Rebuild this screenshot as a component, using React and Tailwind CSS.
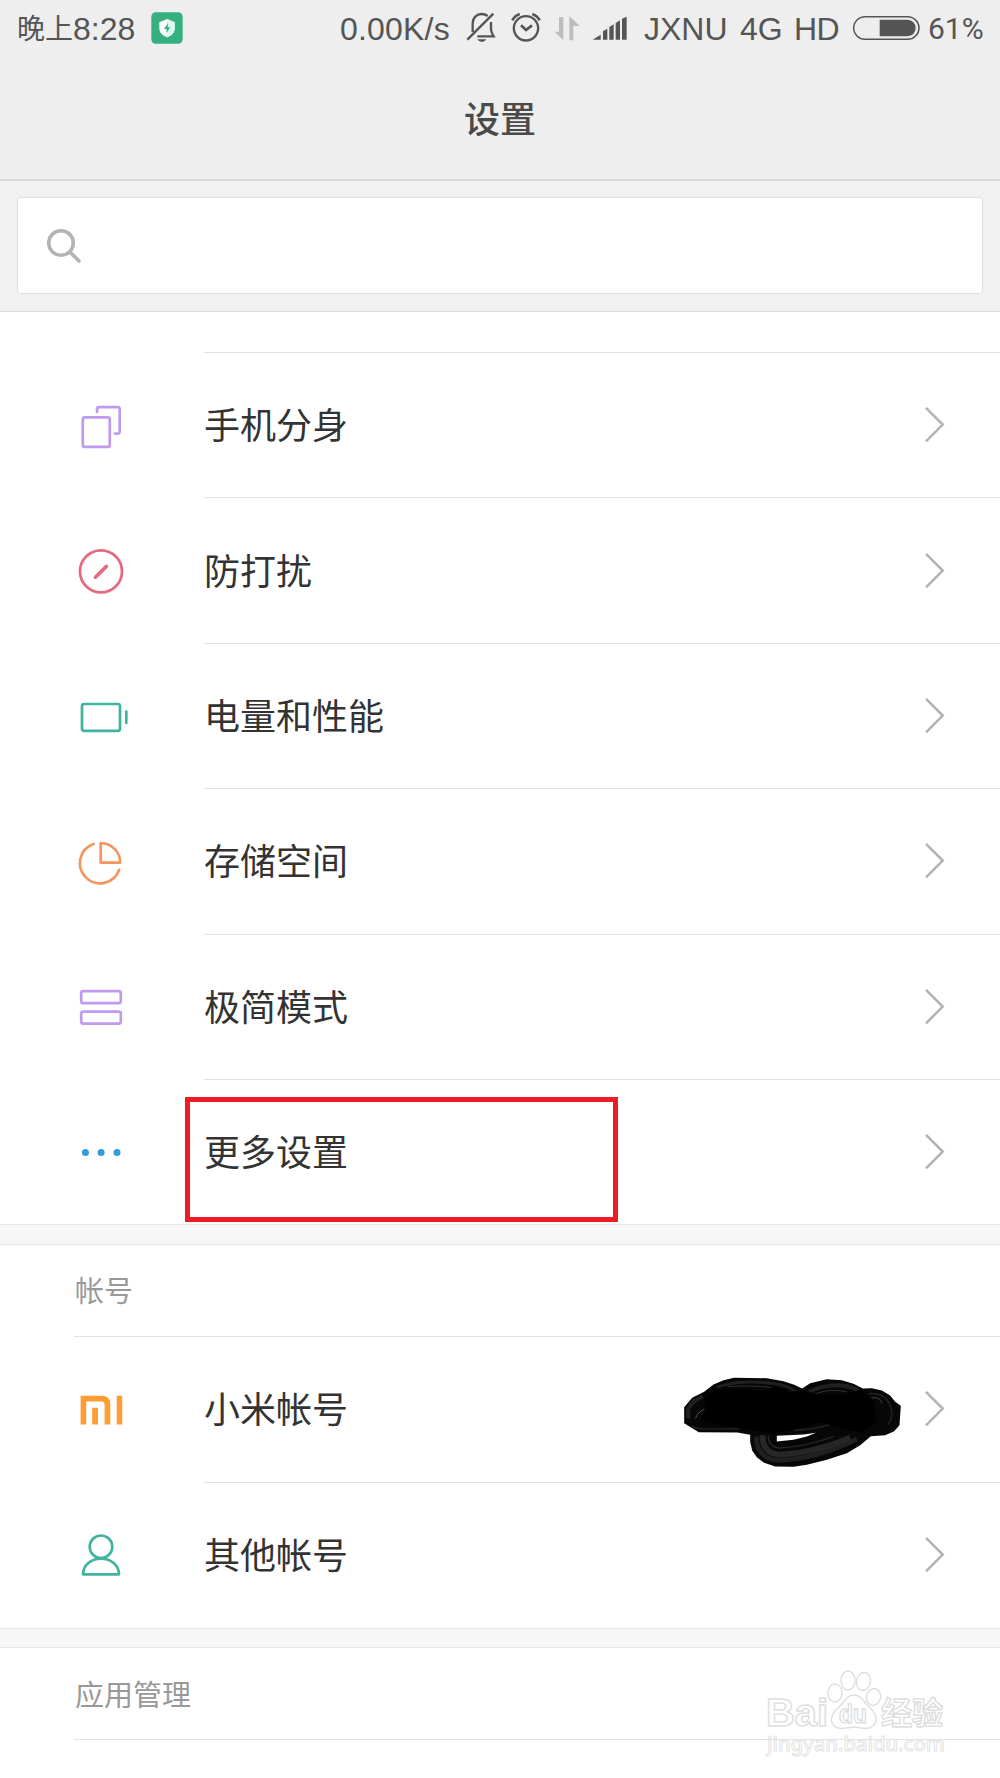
const LINE = 'border-[#e2e2e2]';

function ShieldBadge() {
  return (
    <svg className="w-8 h-8 shrink-0 -translate-y-px" viewBox="0 0 96 96">
      <rect x="1" y="1" width="94" height="94" rx="13" fill="#34b081" />
      <path d="M48 21 71 31V51Q70 67 48 76Q26 67 25 51V31Z" fill="#fff" />
      <path d="M48 21 71 31V51Q70 67 48 76Z" fill="#d9fbee" />
      <path d="M51 33 39 51H47L45 64 58 46H50Z" fill="#34b081" />
    </svg>
  );
}

function BellOffIcon() {
  return (
    <svg className="w-[30px] h-[30px] shrink-0 -translate-y-0.5" viewBox="0 0 90 90" fill="none" stroke="#555" strokeWidth="7">
      <path d="M20 60V35C20 17 32 6 47 6C54 6 60 8 65 12" />
      <path d="M75 30V52C75 60 79 66 83 73H34" />
      <path d="M4 83 82 5" />
      <path d="M34 82H61Q57 90 48 90Q38 90 34 82Z" fill="#555" stroke="none" />
    </svg>
  );
}

function AlarmIcon() {
  return (
    <svg className="w-[30px] h-[30px] shrink-0 -translate-y-0.5" viewBox="0 0 90 90" fill="none" stroke="#555" strokeWidth="7">
      <circle cx="45" cy="49" r="36.5" />
      <path d="M30 40 45 54 63 40" strokeWidth="8" />
      <path d="M4 25Q11 11 26 6M86 25Q79 11 64 6" strokeWidth="8" />
    </svg>
  );
}

function DataArrowsIcon() {
  return (
    <svg className="w-[26px] h-[26px] shrink-0 -translate-y-px" viewBox="0 0 78 78" fill="#bdbdbd">
      <path d="M15 6H28V76L2 50H15Z" />
      <path d="M46 3 77 33H58V76H46Z" />
    </svg>
  );
}

function SignalIcon() {
  return (
    <svg className="w-[35px] h-6 shrink-0 -translate-y-px" viewBox="0 0 105 72" fill="#555">
      <path d="M2 71 26 56V71Z" />
      <path d="M33 46 46 38V71H33Z" />
      <path d="M52 33 65 25V71H52Z" />
      <path d="M71 21 84 13V71H71Z" />
      <path d="M90 8 104 2V71H90Z" />
    </svg>
  );
}

function BatteryIcon() {
  return (
    <svg className="w-[67px] h-[26px] shrink-0 -translate-y-px" viewBox="0 0 201 78">
      <rect x="2" y="5" width="196" height="68" rx="34" fill="none" stroke="#555" strokeWidth="4.5" />
      <path d="M80 14H163Q187 16 188 39Q187 62 163 64H80Z" fill="#555" />
    </svg>
  );
}

function Chevron() {
  return (
    <svg className="w-6 h-10 shrink-0 -translate-x-[0.5px] -translate-y-[0.4px]" viewBox="0 0 24 40" fill="none" stroke="#b3b3b3" strokeWidth="2.6">
      <path d="M3.5 3.3 20.2 20 3.5 36.7" />
    </svg>
  );
}

function Scribble() {
  return (
    <svg className="w-[218px] h-[92px] shrink-0 translate-x-[0.5px] translate-y-[13.5px]" viewBox="70 52 654 276" fill="none">
      <path
        fill="#070707"
        fillRule="evenodd"
        d="M72 144 96 116 132 98 160 76 190 63 222 56 320 57 370 66 402 77 426 88 450 72 500 60 545 63 580 74 608 88 635 87 665 94 690 109 705 128 722 140 718 198 702 216 675 228 632 231 600 258 560 282 500 302 440 317 400 323 345 322 312 311 290 294 276 274 270 248V227L232 220 116 219 94 206 72 192ZM350 230V247L400 242 440 232 468 221 430 226Z"
      />
      <g stroke="#202020" strokeWidth="5">
        <path d="M84 178V150Q94 126 128 112" strokeWidth="12" />
        <path d="M106 178Q112 160 132 150" stroke="#555" strokeWidth="3" />
        <path d="M170 84Q230 64 310 70T408 100" strokeWidth="9" />
        <path d="M205 82Q290 78 340 86" stroke="#303030" strokeWidth="3" />
        <path d="M446 98Q500 72 550 80T600 108" strokeWidth="12" />
        <path d="M460 106Q510 86 560 98" stroke="#303030" strokeWidth="3" />
        <path d="M625 104Q672 100 688 134T684 196" />
        <path d="M634 116Q660 112 666 132" stroke="#444" strokeWidth="3" />
        <path d="M92 201 118 209H236" stroke="#1c1c1c" strokeWidth="5" />
        <path d="M400 214Q500 208 550 178" strokeWidth="5" />
        <path d="M290 232Q284 292 350 304Q470 300 590 240" strokeWidth="14" />
        <path d="M308 228Q304 276 350 286Q450 286 570 236" stroke="#262626" strokeWidth="18" />
        <path d="M324 230Q324 262 356 267Q440 262 520 232" stroke="#2a2a2a" strokeWidth="4" />
      </g>
      <path
        fill="#000"
        d="M132 120Q150 90 210 88Q260 90 310 98Q345 68 385 100L420 92Q500 118 560 105L600 90 640 125 650 190 600 220 480 190 400 212 330 222 190 200 136 190 122 176 138 160Z"
      />
    </svg>
  );
}

function RowIcon({ color, children }) {
  return (
    <svg
      className="w-[60px] h-[60px] shrink-0"
      viewBox="0 0 60 60"
      fill="none"
      stroke={color}
      strokeWidth="2.7"
      strokeLinecap="round"
      strokeLinejoin="round"
    >
      {children}
    </svg>
  );
}

const icons = {
  clone: (
    <RowIcon color="#be9bee">
      <rect x="12.8" y="22.3" width="27" height="29.6" rx="2" />
      <path d="M27 17V14.1Q27 12.1 29 12.1H47.5Q49.7 12.1 49.7 14.1V36.6Q49.7 38.6 47.5 38.6H44.8" />
    </RowIcon>
  ),
  dnd: (
    <RowIcon color="#e56a7f">
      <circle cx="31" cy="31.4" r="21" />
      <path d="M25.4 37.2 36.4 26.4" strokeWidth="3.6" />
    </RowIcon>
  ),
  battery: (
    <RowIcon color="#41b3a0">
      <rect x="12" y="19" width="38" height="26.8" rx="2" />
      <path d="M56.3 26.500V38" />
    </RowIcon>
  ),
  storage: (
    <RowIcon color="#f59560">
      <path d="M23.6 13A20.2 20.2 0 1 0 49.2 38.8" />
      <path d="M30.7 12.2V31.7H50.2A19.5 19.5 0 0 0 30.7 12.2Z" />
    </RowIcon>
  ),
  lite: (
    <RowIcon color="#be9bee">
      <rect x="11.2" y="15.2" width="39.6" height="12" rx="2" />
      <rect x="11.2" y="35.6" width="39.6" height="12" rx="2" />
    </RowIcon>
  ),
  more: (
    <svg className="w-[60px] h-[60px] shrink-0" viewBox="0 0 60 60" fill="#319dd6">
      <circle cx="15.4" cy="30.6" r="3.5" />
      <circle cx="31.1" cy="30.6" r="3.5" />
      <circle cx="47" cy="30.6" r="3.5" />
    </svg>
  ),
  mi: (
    <svg className="w-[60px] h-[60px] shrink-0" viewBox="0 0 60 60" fill="#ff9c33">
      <path d="M10.6 16.8H32Q40.3 16.8 40.3 25.3V45.6H34.6V26.3Q34.6 22.5 31 22.5H16.2V45.6H10.6Z" />
      <path d="M22.2 28.8H28V45.6H22.2ZM46.7 16.8H52.2V45.6H46.7Z" />
    </svg>
  ),
  user: (
    <RowIcon color="#41b3a0">
      <circle cx="31" cy="21.8" r="11.3" />
      <path d="M13 49.3C13.2 40 21 33.6 31 33.6S48.8 40 49 49.3Z" />
    </RowIcon>
  ),
};

const deviceRows = [
  { icon: 'clone', label: '手机分身' },
  { icon: 'dnd', label: '防打扰' },
  { icon: 'battery', label: '电量和性能' },
  { icon: 'storage', label: '存储空间' },
  { icon: 'lite', label: '极简模式' },
  { icon: 'more', label: '更多设置', marked: true },
];

const accountRows = [
  { icon: 'mi', label: '小米帐号', hidden: true },
  { icon: 'user', label: '其他帐号' },
];

function SettingRow({ icon, label, marked, hidden, first }) {
  return (
    <div className="relative flex h-[145.4px] pl-[70px]">
      <div className="flex items-center w-[134px] shrink-0">{icons[icon]}</div>
      <div className={`flex flex-1 items-center pr-[53px] ${first ? '' : `border-t ${LINE}`}`}>
        <span className="flex-1 pb-1 text-[36px] leading-none text-[#333]">{label}</span>
        {hidden && <Scribble />}
        <div className={hidden ? 'ml-[22px] flex' : 'flex'}><Chevron /></div>
      </div>
      {marked && (
        <div className="absolute left-[185px] top-[18px] w-[433px] h-[125px] border-5 border-[#ee1c24]" />
      )}
    </div>
  );
}

function SectionTitle({ children }) {
  return (
    <div className="h-[92px] pl-[74px] flex">
      <div className={`flex-1 flex items-center border-b ${LINE} pl-px text-[29px] text-[#999]`}>{children}</div>
    </div>
  );
}

function Gap() {
  return <div className="h-[20.4px] bg-[#f6f6f6] border-y border-[#e8e8e8]" />;
}

function Watermark() {
  return (
    <svg
      className="absolute left-[760px] top-[1664px] w-[200px] h-[100px]"
      viewBox="0 0 200 100"
      fill="#fff"
      stroke="#dedede"
      strokeWidth="1.4"
      fontFamily="'Liberation Sans', 'Noto Sans CJK SC', sans-serif"
      fontWeight="700"
    >
      <text x="6" y="62" fontSize="38" textLength="62" lengthAdjust="spacingAndGlyphs">Bai</text>
      <ellipse cx="75" cy="29" rx="7" ry="9" />
      <ellipse cx="88" cy="16.5" rx="7" ry="9.5" />
      <ellipse cx="103.5" cy="17.5" rx="7" ry="9" transform="rotate(12 103.5 17.5)" />
      <ellipse cx="113.5" cy="33" rx="7" ry="8.5" transform="rotate(15 113.5 33)" />
      <path d="M94 31C102 31 104 39 110 44C117 50 118 58 113 62C107 67 100 63 94 63S80 67 74 62C69 57 72 49 78 44C84 39 86 31 94 31Z" />
      <text x="79" y="59" fontSize="25" textLength="28" lengthAdjust="spacingAndGlyphs">du</text>
      <text x="121" y="60" fontSize="31" textLength="62" lengthAdjust="spacingAndGlyphs" fontFamily="'Noto Sans CJK SC', sans-serif">经验</text>
      <text x="7" y="87" fontSize="20" textLength="178" lengthAdjust="spacingAndGlyphs" fontFamily="'Noto Sans', sans-serif" fontWeight="500" stroke="#e4e4e4" strokeWidth="1">jingyan.baidu.com</text>
    </svg>
  );
}

export default function App() {
  return (
    <div className="relative w-[1000px] h-[1778px] overflow-hidden bg-white font-['Noto_Sans_CJK_SC',sans-serif]">
      <header className="h-[181px] bg-[#eee] border-b-2 border-[#dadada]">
        <div className="flex items-center h-[58px] pl-[17px] pr-4 text-[32px] leading-none text-[#555] whitespace-nowrap font-['Liberation_Sans','Noto_Sans_CJK_SC',sans-serif]">
          <span className="flex items-center w-[134px]">
            <span className="text-[28px] translate-y-px">晚上</span>
            <span>8:28</span>
          </span>
          <ShieldBadge />
          <span className="ml-auto w-[126px] tracking-[0.2px]">0.00K/s</span>
          <BellOffIcon />
          <span className="w-[15px]" />
          <AlarmIcon />
          <span className="w-[13px]" />
          <DataArrowsIcon />
          <span className="w-[12px]" />
          <SignalIcon />
          <span className="ml-[17px] w-[96px]">JXNU</span>
          <span className="w-[54px]">4G</span>
          <span className="w-[59px] tracking-[-0.5px]">HD</span>
          <BatteryIcon />
          <span className="ml-[8px] w-[56px] text-[30px] font-['Roboto',sans-serif]">61%</span>
        </div>
        <h1 className="h-[118px] flex items-center justify-center text-[36px] leading-none font-medium text-[#4a4a4a]">设置</h1>
      </header>

      <div className="h-[131px] bg-[#f1f1f1] border-b border-[#dcdcdc] px-[17px] pt-4">
        <div className="h-[97px] bg-white border border-[#e0e0e0] rounded-[3px] flex items-center pl-[29px]">
          <svg className="w-9 h-9" viewBox="0 0 36 36" fill="none" stroke="#b3b3b3" strokeWidth="3.6" strokeLinecap="round">
            <circle cx="14" cy="15" r="12.3" />
            <path d="M23 24 32 33" />
          </svg>
        </div>
      </div>

      <main>
        <div className="h-10" />
        {deviceRows.map((row) => (
          <SettingRow key={row.label} {...row} />
        ))}
        <Gap />
        <SectionTitle>帐号</SectionTitle>
        {accountRows.map((row, i) => (
          <SettingRow key={row.label} {...row} first={i === 0} />
        ))}
        <Gap />
        <SectionTitle>应用管理</SectionTitle>
      </main>
      <Watermark />
    </div>
  );
}
